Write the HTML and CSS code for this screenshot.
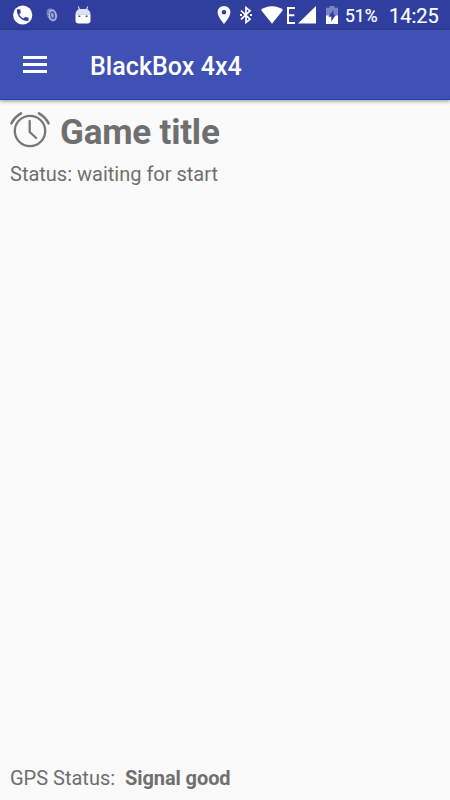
FILE: index.html
```html
<!DOCTYPE html>
<html lang="en">
<head>
	<meta charset="utf-8">
	<title>BlackBox 4x4</title>
	<link rel="stylesheet" href="styles.css">
</head>
<body>

<!-- status bar -->
<div class="statusbar">
	<svg class="icon-phone" width="20" height="20" viewBox="0 0 20 20">
		<circle cx="9.700" cy="10" r="9.600" fill="#fff"/>
		<path transform="translate(1.900 2.300) scale(.65)" fill="#303f9f" d="M6.600 10.800c1.400 2.800 3.800 5.100 6.600 6.600l2.200-2.200c.3-.3.7-.4 1-.2 1.100.4 2.300.6 3.600.6.6 0 1 .4 1 1V20c0 .6-.4 1-1 1C10.600 21 3 13.400 3 4c0-.6.4-1 1-1h3.500c.6 0 1 .4 1 1 0 1.300.2 2.500.6 3.600.1.300 0 .7-.2 1z"/>
	</svg>
	<svg class="icon-tire" width="12" height="14" viewBox="0 0 12 14">
		<path fill="#7f89c6" d="M4.500.5C1.500.5.300 2.800.7 5.500c.5 3.500 3 7.500 6.300 8 3 0 4.500-3 4.200-6.500C10.800 3.500 8 .5 4.500.5z"/>
		<ellipse cx="6.600" cy="7.300" rx="3.300" ry="4.800" transform="rotate(-12 6.600 7.300)" fill="#4c59ab" stroke="#c0c5e3" stroke-width="1.200"/>
		<ellipse cx="6.300" cy="7.300" rx="1.200" ry="2.300" transform="rotate(-12 6.300 7.300)" fill="#a4acd8"/>
		<path stroke="#4c59ab" stroke-width=".7" d="M1 4l2 .6M1.300 7.500l1.700-.2"/>
	</svg>
	<svg class="icon-android" width="16" height="18" viewBox="0 0 16 18">
		<path stroke="#fff" stroke-width="1" d="M3.300.5l1.400 3.500M12.700.5l-1.400 3.500"/>
		<path fill="#fff" d="M.5 8.200h15v6.300a3 3 0 0 1-3 3h-9a3 3 0 0 1-3-3z"/>
		<path fill="#dfe2f1" d="M.5 8.200C.7 5 3 3 5 3h6c2 0 4.300 2 4.500 5.200z"/>
		<path fill="#303f9f" d="M3.500 9.500h1.800v1.600H3.500zM10.700 9.500h1.800v1.600h-1.800z"/>
	</svg>

	<svg class="icon-pin" width="14" height="18" viewBox="0 0 14 18">
		<path fill="#fff" fill-rule="evenodd" d="M7 0C3.400 0 .6 2.800.6 6.300 .6 11 7 18 7 18s6.400-7 6.400-11.700C13.400 2.800 10.600 0 7 0zm0 8.600a2.300 2.300 0 1 1 0-4.600 2.300 2.300 0 0 1 0 4.600z"/>
	</svg>
	<svg class="icon-bluetooth" width="12" height="18" viewBox="0 0 12 18">
		<path fill="none" stroke="#fff" stroke-width="1.700" d="M1 4.600l9 8.600L6 16.400V1.600l4 3.200L1 13.400"/>
		<path fill="#fff" d="M0 8h2v2H0zM10 8h2v2h-2z"/>
	</svg>
	<svg class="icon-wifi" width="22" height="18" viewBox="0 0 22 18">
		<path fill="#fff" d="M11 17.800L22 4C19 1.600 15.200.3 11 .3S3 1.600 0 4z"/>
	</svg>
	<svg class="icon-edge" width="8" height="17" viewBox="0 0 8 17">
		<path fill="none" stroke="#fff" stroke-width="2" d="M8 1H1v15h7M1 8.200h6.300"/>
	</svg>
	<svg class="icon-signal" width="18" height="18" viewBox="0 0 18 18">
		<path fill="#fff" d="M18 0v17.600H0z"/>
	</svg>
	<svg class="icon-battery" width="12" height="18" viewBox="0 0 12 18">
		<path fill="#7b85c3" d="M3.500 0h5v1.700H12V10H0V1.700h3.500z"/>
		<path fill="#fff" d="M0 9.500h12V18H0z"/>
		<path fill="#303f9f" d="M7.500 4L2.300 10.800H5.300v4.700L9.900 8.800H7.500z"/>
	</svg>
	<span class="battery-text">51%</span>
	<span class="clock">14:25</span>
</div>

<!-- app bar -->
<div class="navbar">
	<div class="menu">
		<span></span>
		<span></span>
		<span></span>
	</div>
	<div class="title">BlackBox 4x4</div>
</div>

<div class="container">
	<div class="game">
		<svg class="alarm" width="40" height="40" viewBox="0 0 40 40">
			<g fill="none" stroke="#777" stroke-width="2.300" stroke-linecap="round">
				<circle cx="20" cy="20" r="15.200"/>
				<path d="M19.700 10v11l6.500 6"/>
				<path stroke-width="2.600" d="M1.500 12.300Q4.500 6 11 2.300M38.500 12.300Q35.500 6 29 2.300"/>
			</g>
		</svg>
		<h1>Game title</h1>
	</div>
	<p class="status">Status: waiting for start</p>
	<div class="gps">
		<span>GPS Status:</span>
		<b>Signal good</b>
	</div>
</div>

</body>
</html>
```
FILE: styles.css
```css
body {
  margin: 0;
  height: 800px;
  display: flex;
  flex-direction: column;
  overflow: hidden;
  font-family: Roboto, Arial, sans-serif;
  color: #6f6f6f;
  background-color: #fafafa;
}

svg {
  display: block;
  flex-shrink: 0;
}

/* Status bar */
.statusbar {
  display: flex;
  align-items: center;
  height: 30px;
  flex-shrink: 0;
  box-sizing: border-box;
  padding-left: 13px;
  color: white;
  background-color: #303f9f;
  white-space: nowrap;
}

.icon-tire {
  margin-left: 13px;
}

.icon-android {
  margin-left: 16.500px;
}

.icon-pin {
  margin-left: 126px;
}

.icon-bluetooth {
  margin-left: 9.500px;
}

.icon-wifi {
  margin-left: 9px;
}

.icon-edge {
  margin-left: 4px;
}

.icon-signal {
  margin-left: 3px;
}

.icon-battery {
  margin-left: 9.500px;
}

.battery-text {
  width: 44px;
  margin-left: 7.500px;
  font-size: 17.500px;
  line-height: 30px;
  padding-top: 2px;
  -webkit-text-stroke: 0.2px white;
}

.clock {
  font-size: 20px;
  line-height: 30px;
  padding-top: 1px;
  -webkit-text-stroke: 0.2px white;
}

/* App bar */
.navbar {
  display: flex;
  align-items: center;
  height: 70px;
  flex-shrink: 0;
  box-sizing: border-box;
  padding-left: 23px;
  color: white;
  background-color: #3f51b5;
  border-bottom: 1px solid #2c3fa5;
  box-shadow: 0 1px 4px rgba(0,0,0,0.45);
}

.menu {
  display: flex;
  flex-direction: column;
  gap: 4.500px;
  width: 24px;
}

.menu span {
  height: 2.500px;
  background-color: white;
}

.title {
  margin-left: 43px;
  padding-top: 3px;
  font-size: 25px;
  font-weight: 500;
  letter-spacing: 0.05px;
}

/* Content */
.container {
  display: flex;
  flex-direction: column;
  flex: 1;
  padding: 10px;
}

.game {
  display: flex;
  align-items: center;
  gap: 10px;
  height: 42px;
}

.alarm {
  margin-bottom: 1px;
}

.game h1 {
  margin: 0;
  padding-top: 2px;
  font-size: 35px;
  font-weight: bold;
  letter-spacing: -0.2px;
}

.status {
  margin: 10px 0 0 0;
  font-size: 20px;
  line-height: 24px;
}

.gps {
  display: flex;
  gap: 10px;
  margin-top: auto;
  font-size: 20px;
  line-height: 24px;
}

.gps b {
  letter-spacing: -0.1px;
}
```
